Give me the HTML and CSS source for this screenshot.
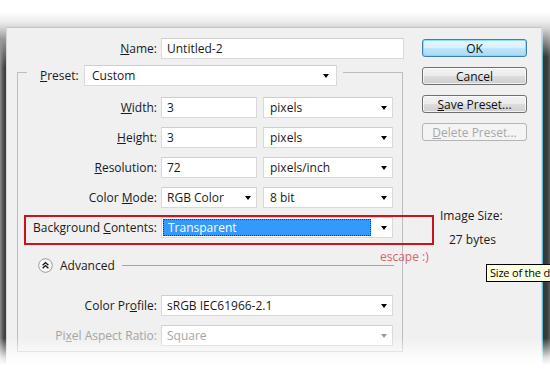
FILE: index.html
```html
<!DOCTYPE html>
<html lang="en">
<head>
<meta charset="utf-8">
<title>New</title>
<link rel="stylesheet" href="styles.css">
</head>
<body>
<div class="screen">
  <div class="topband"></div>
  <div class="middle">
    <div class="lstrip"></div>
    <div class="dialog">
      <div class="main">
        <div class="row name-row">
          <span class="lbl name-lbl"><u>N</u>ame:</span>
          <div class="field w-name">Untitled-2</div>
        </div>
        <fieldset class="group">
          <legend class="legend">
            <div class="legend-in">
              <span class="preset-lbl"><u>P</u>reset:</span>
              <div class="field select w-preset"><span>Custom</span><i class="arrow"></i></div>
            </div>
          </legend>
          <div class="rows">
            <div class="row r-first">
              <span class="lbl"><u>W</u>idth:</span>
              <div class="field w-num">3</div>
              <div class="field select w-unit"><span>pixels</span><i class="arrow"></i></div>
            </div>
            <div class="row r-next">
              <span class="lbl"><u>H</u>eight:</span>
              <div class="field w-num">3</div>
              <div class="field select w-unit"><span>pixels</span><i class="arrow"></i></div>
            </div>
            <div class="row r-next">
              <span class="lbl"><u>R</u>esolution:</span>
              <div class="field w-num">72</div>
              <div class="field select w-unit"><span>pixels/inch</span><i class="arrow"></i></div>
            </div>
            <div class="row r-next">
              <span class="lbl">Color <u>M</u>ode:</span>
              <div class="field select w-num"><span>RGB Color</span><i class="arrow"></i></div>
              <div class="field select w-unit"><span>8 bit</span><i class="arrow"></i></div>
            </div>
            <div class="row r-next">
              <span class="lbl">Background <u>C</u>ontents:</span>
              <div class="field select w-full">
                <span class="hilite">Transparent</span><i class="arrow"></i>
              </div>
            </div>
            <div class="adv">
              <svg class="adv-ico" width="15" height="15" viewBox="0 0 15 15">
                <circle cx="7.5" cy="7.5" r="6.8" fill="#fdfdfd" stroke="#9a9a9a" stroke-width="1"/>
                <path d="M4.6 7.2 L7.5 4.6 L10.4 7.2 M4.6 10.2 L7.5 7.6 L10.4 10.2" fill="none" stroke="#111" stroke-width="1.4"/>
              </svg>
              <span class="adv-txt">Advanced</span>
              <span class="rule"></span>
            </div>
            <div class="row r-prof">
              <span class="lbl">Color Pr<u>o</u>file:</span>
              <div class="field select w-full"><span>sRGB IEC61966-2.1</span><i class="arrow"></i></div>
            </div>
            <div class="row r-next disabled">
              <span class="lbl">Pi<u>x</u>el Aspect Ratio:</span>
              <div class="field select w-full"><span>Square</span><i class="arrow"></i></div>
            </div>
          </div>
        </fieldset>
      </div>
      <div class="side">
        <div class="btn btn-ok">OK</div>
        <div class="btn">Cancel</div>
        <div class="btn"><u>S</u>ave Preset...</div>
        <div class="btn btn-dis"><u>D</u>elete Preset...</div>
        <div class="info-lbl">Image Size:</div>
        <div class="info-val">27 bytes</div>
      </div>
    </div>
    <div class="rstrip"></div>
  </div>
  <div class="fade-bottom"></div>
  <div class="redbox"></div>
  <div class="note">escape :)</div>
  <div class="tooltip">Size of the d</div>
</div>
</body>
</html>
```

FILE: styles.css
```css
* { box-sizing: border-box; }
html, body { margin: 0; padding: 0; background: #fff; }
body {
  font-family: "Open Sans", "Noto Sans", sans-serif;
  font-size: 12px;
  color: #1a1a1a;
}
u { text-decoration: underline; text-underline-offset: 1px; }

.screen {
  position: relative;
  width: 550px;
  height: 374px;
  overflow: hidden;
  background: #fff;
}
.topband {
  height: 27px;
  background: linear-gradient(#ffffff 0%, #ffffff 45%, #ececec 80%, #d9d9d9 100%);
}
.middle {
  display: flex;
  height: 347px;
}
.lstrip {
  width: 6px;
  background:
    linear-gradient(#d9d9d9 0px, #9a9a9a 12px, rgba(0,0,0,0) 40px),
    linear-gradient(to right, #8c8c8c, #4a4a4a 60%, #3c3c3c);
}
.rstrip {
  flex: 1;
  background:
    linear-gradient(#dcdcdc 0px, rgba(220,220,220,0) 30px),
    linear-gradient(to right, #66b9cf 0, #66b9cf 1px, #2e3a3e 1px, #3a3a3a 5px, #5c5c5c 8px);
}
.dialog {
  width: 536px;
  display: flex;
  background: #f0f0f0;
  border-top: 1px solid #c3c3c3;
  border-left: 1px solid #d6d6d6;
  border-right: 1px solid #d6d6d6;
}
.main {
  width: 408px;
  padding-top: 10px;
}
.row {
  display: flex;
  align-items: center;
  height: 21px;
}
.lbl {
  width: 139px;
  margin-right: 4px;
  text-align: right;
  white-space: nowrap;
}
.name-lbl { width: 150px; }
.field {
  height: 21px;
  background: #fff;
  border: 1px solid #d9d9d9;
  border-top-color: #cfcfcf;
  display: flex;
  align-items: center;
  padding-left: 5px;
  white-space: nowrap;
}
.select {
  justify-content: space-between;
  padding-right: 4px;
}
.arrow {
  width: 0;
  height: 0;
  border-left: 3.5px solid transparent;
  border-right: 3.5px solid transparent;
  border-top: 4px solid #000;
  margin-right: 1px;
}
.w-name { width: 243px; }
.w-preset { width: 253px; }
.w-num { width: 96px; margin-right: 6px; }
.w-unit { width: 130px; padding-left: 6px; }
.w-full { width: 232px; }

.group {
  margin: -1px 0 0 10px;
  width: 386px;
  padding: 0 0 5px 0;
  border: 1px solid #bdbdbd;
  min-inline-size: 0;
}
.legend {
  margin-left: 9px;
  padding: 7px 6px 0 13px;
}
.legend-in {
  display: flex;
  align-items: center;
}
.preset-lbl {
  width: 44px;
}
.w-preset { padding-left: 7px; padding-right: 6px; }
.rows {
  display: flex;
  flex-direction: column;
}
.r-first { margin-top: 11px; }
.r-next { margin-top: 9px; }
.hilite {
  flex: 1;
  align-self: stretch;
  margin: 1px 10px 1px -4px;
  padding-left: 4px;
  background: #3399ff;
  color: #fff;
  border: 1px dotted #1a3a66;
  display: flex;
  align-items: center;
}
.adv {
  display: flex;
  align-items: center;
  height: 15px;
  margin-top: 20px;
  padding-left: 20px;
}
.adv-ico { display: block; }
.adv-txt { margin-left: 7px; font-size: 12px; }
.rule {
  flex: 1;
  height: 1px;
  background: #a5a5a5;
  margin-left: 7px;
  margin-right: 8px;
}
.r-prof { margin-top: 22px; }
.disabled { color: #a3a3a3; }
.disabled .field { color: #a3a3a3; }
.disabled .arrow { border-top-color: #9a9a9a; }

.side {
  flex: 1;
  display: flex;
  flex-direction: column;
  padding-top: 11px;
  padding-left: 7px;
}
.btn {
  width: 105px;
  height: 18px;
  margin-bottom: 10px;
  border: 1px solid #707070;
  border-radius: 3px;
  background: linear-gradient(#f3f3f3 0%, #ebebeb 50%, #dddddd 51%, #cfcfcf 100%);
  box-shadow: inset 0 0 0 1px rgba(255,255,255,0.7);
  display: flex;
  align-items: center;
  justify-content: center;
  font-size: 12px;
  color: #111;
}
.btn-ok {
  border-color: #3c7fb1;
  background: linear-gradient(#eaf6fd 0%, #d9f0fc 50%, #bee6fd 51%, #a7d9f5 100%);
  box-shadow: inset 0 0 0 1px rgba(110,220,250,0.8);
}
.btn-dis {
  border-color: #b4b4b4;
  background: #f4f4f4;
  box-shadow: none;
  color: #a8a8a8;
}
.info-lbl {
  margin-top: 57px;
  margin-left: 18px;
  line-height: 16px;
}
.info-val {
  margin-top: 8px;
  margin-left: 27px;
  line-height: 16px;
}

.fade-bottom {
  position: absolute;
  left: 0;
  right: 0;
  top: 338px;
  height: 36px;
  background: linear-gradient(rgba(255,255,255,0) 0%, rgba(255,255,255,0.85) 55%, #fff 75%);
}
.redbox {
  position: absolute;
  left: 24px;
  top: 215px;
  width: 410px;
  height: 30px;
  border: 2px solid #c8141c;
}
.note {
  position: absolute;
  left: 380px;
  top: 249px;
  font-size: 12px;
  color: #e0606a;
  line-height: 16px;
}
.tooltip {
  position: absolute;
  left: 486px;
  right: -2px;
  top: 264px;
  height: 18px;
  padding: 0 0 0 3px;
  background: #ffffe1;
  border: 1px solid #000;
  font-size: 11px;
  letter-spacing: -0.2px;
  line-height: 16px;
  white-space: nowrap;
  color: #000;
  overflow: hidden;
}
```
